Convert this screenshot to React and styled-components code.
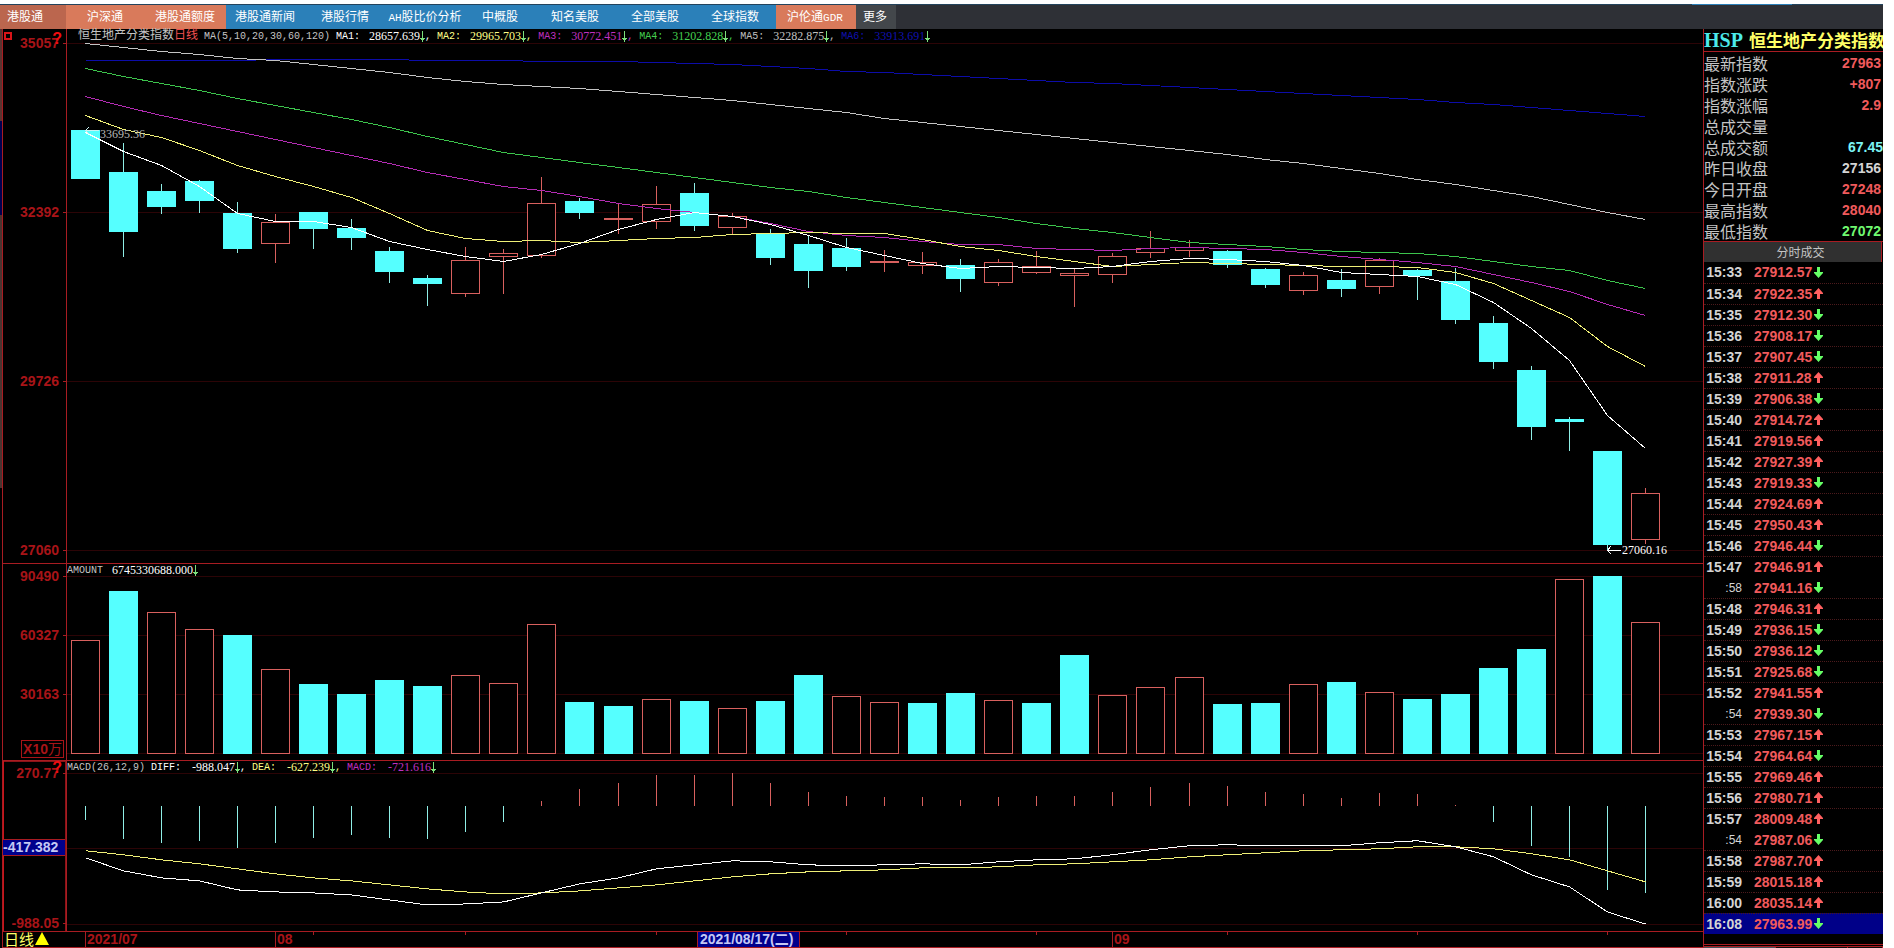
import React from "react";
import styled, { createGlobalStyle, css } from "styled-components";

const C = {
  line: "#a81c22",
  axis: "#a81418",
  grid: "#2c0406",
  cyan: "#55ffff",
  thinCyan: "#8feee6",
  red: "#d8605e",
  price: "#f05a5c",
  green: "#66ff66",
  grey: "#c4c4c4",
  yellow: "#ffff66",
};

const CJK = '"Noto Sans CJK SC"';

const Global = createGlobalStyle`
  *, *::before, *::after { box-sizing: border-box; }
  body { margin: 0; background: #fff; }
  button { font: inherit; color: inherit; border: 0; background: none; padding: 0; cursor: pointer; }
`;

const Page = styled.div`
  display: flex;
  flex-direction: column;
  min-height: 100vh;
  padding: 4px 11px 0 0;
  font-family: "Liberation Sans", ${CJK}, sans-serif;
  color: ${C.grey};
`;

/* ---------- navigation ---------- */

const Nav = styled.nav`
  position: relative;
  display: flex;
  height: 25px;
  flex: none;
  background: #2e3036;
  border-top: 1px solid #23435c;
`;

const NAV_TONES = { dark: "#bb664e", coral: "#d97a5b", blue: "#2b80b9", more: "#43474b" };

const NavButton = styled.button`
  flex: none;
  width: ${(p) => p.$width || 80}px;
  background: ${(p) => NAV_TONES[p.$tone]};
  padding: 2px ${(p) => (p.$tone === "dark" ? 16 : 2)}px 0 0;
  color: #fff;
  font: 12px/22px "Liberation Mono", ${CJK}, monospace;
  white-space: nowrap;
`;

const NavLatin = styled.span`
  font-size: 11px;
`;

const NavMark = styled.span`
  position: absolute;
  top: -1px;
  right: 91px;
  width: 100px;
  height: 1px;
  background: #2b80b9;
`;

/* ---------- frame ---------- */

const Body = styled.div`
  display: grid;
  grid-template-columns: 2px minmax(0, 1fr) 180px;
  flex: 1;
  background: #000;
`;

const EdgeStrip = styled.div`
  display: flex;
  flex-direction: column;
`;

const EdgePart = styled.span`
  flex: ${(p) => p.$grow} 1 0;
  background: ${(p) => p.$tone};
`;

const Charts = styled.main`
  display: flex;
  flex-direction: column;
  border-left: 1px solid ${C.line};
  min-width: 0;
`;

const Pane = styled.section`
  display: grid;
  grid-template-columns: 64px minmax(0, 1fr);
  flex: ${(p) => p.$grow} 1 0;
  min-height: 120px;
  border-bottom: 1px solid ${C.line};
`;

const Axis = styled.div`
  position: relative;
  display: flex;
  flex-direction: column;
  justify-content: space-between;
  align-items: flex-end;
  padding: ${(p) => p.$pad};
  border-right: 1px solid ${C.line};
  ${(p) =>
    p.$active &&
    css`
      box-shadow: inset 1px 0 #c8141a, inset -1px 0 #8c1418, inset 0 1px #8c1418;
    `}
`;

const AxisLabel = styled.span`
  position: relative;
  padding-right: 7px;
  color: ${C.axis};
  font: bold 14px/14px "Liberation Sans", sans-serif;
  &::after {
    content: "";
    position: absolute;
    right: 0;
    top: 7px;
    width: 3px;
    height: 1px;
    background: ${C.line};
  }
`;

const UnitBox = styled.span`
  margin: -6px 2px 0 0;
  padding: 0 1px;
  border: 1px solid ${C.axis};
  color: ${C.axis};
  font: bold 14px/16px "Liberation Sans", ${CJK}, sans-serif;
  white-space: nowrap;
`;

const UnitText = styled.span`
  font-weight: 400;
`;

const CursorValue = styled.output`
  width: 62px;
  margin-right: 1px;
  border: solid ${C.line};
  border-width: 1px 0;
  background: #00008c;
  color: #c4c8f4;
  font: bold 14px/15px "Liberation Sans", sans-serif;
`;

const HelpButton = styled.button`
  position: absolute;
  z-index: 1;
  top: ${(p) => p.$top}px;
  right: 4px;
  color: #f00c10;
  font: bold 16px/14px "Liberation Sans", sans-serif;
`;

const CloseBox = styled.button`
  position: absolute;
  top: 3px;
  left: 1px;
  width: 8px;
  height: 8px;
  border: 2px solid #d81418;
`;

const Plot = styled.div`
  position: relative;
  display: flex;
  min-width: 0;
`;

const Drawing = styled.svg`
  display: block;
  flex: 1;
  width: 100%;
  height: 100%;
  min-width: 0;
`;

const Legend = styled.div`
  position: absolute;
  top: 0;
  left: ${(p) => p.$left}px;
  display: flex;
  align-items: center;
  height: ${(p) => p.$height}px;
  font: 10px/13px "Liberation Mono", ${CJK}, monospace;
  white-space: pre;
`;

const LegendTitle = styled.span`
  font-size: 12px;
  color: ${(p) => p.$color || C.grey};
`;

const LegendName = styled.span`
  margin: 0 6px 0 ${(p) => p.$left || 0}px;
`;

const LegendItem = styled.span`
  display: flex;
  align-items: center;
  color: ${(p) => p.$color};
`;

const LegendValue = styled.span`
  margin-left: ${(p) => (p.$flush ? 0 : 6)}px;
  min-width: ${(p) => p.$chars * 6}px;
  font: 12px/13px "Liberation Serif", serif;
  text-align: right;
`;

const PlotNote = styled.span`
  position: absolute;
  transform: translateY(-50%);
  color: ${(p) => p.$color};
  font: 12px/12px "Liberation Serif", serif;
`;

/* ---------- date axis ---------- */

const DateRow = styled.footer`
  display: grid;
  grid-template-columns: 64px minmax(0, 1fr);
  height: 16px;
  flex: none;
  border-bottom: 1px solid ${C.line};
`;

const PeriodButton = styled.button`
  display: flex;
  align-items: center;
  gap: 1px;
  height: 14px;
  padding-left: 1px;
  color: ${C.yellow};
  font: 15px/14px ${CJK}, sans-serif;
`;

const DateLabel = styled.span`
  position: absolute;
  top: 0;
  height: 15px;
  padding-left: 1px;
  border-left: 1px solid ${C.line};
  color: ${C.axis};
  font: bold 14px/14px "Liberation Sans", ${CJK}, sans-serif;
  white-space: nowrap;
  ${(p) =>
    p.$current &&
    css`
      padding: 0 6px 0 2px;
      border-right: 1px solid ${C.line};
      background: #00008c;
      color: #c4c8f4;
    `}
`;

const BottomEdge = styled.div`
  height: 1px;
  flex: none;
  background: linear-gradient(90deg, #b4b4b0 60px, #000 60px);
`;

/* ---------- quote panel ---------- */

const Side = styled.aside`
  border-left: 1px solid ${C.line};
  overflow: hidden;
`;

const SideTitle = styled.h1`
  display: flex;
  align-items: center;
  gap: 6px;
  height: 23px;
  margin: 0;
  border-bottom: 1px solid ${C.line};
  color: ${C.yellow};
  font: bold 17px/22px ${CJK}, sans-serif;
  white-space: nowrap;
`;

const Code = styled.span`
  color: #4ceaea;
  font: bold 20px/22px "Liberation Serif", serif;
`;

const Quotes = styled.dl`
  margin: 0;
  border-bottom: 1px solid ${C.line};
`;

const Quote = styled.div`
  display: flex;
  justify-content: space-between;
  height: 21px;
  padding-right: ${(p) => (p.$wide ? 0 : 2)}px;
  font-size: 16px;
  line-height: 22px;
  font-family: ${CJK}, sans-serif;
`;

const QuoteValue = styled.dd`
  margin: 0;
  color: ${(p) => p.$color};
  font: bold 14px/22px "Liberation Sans", sans-serif;
`;

const TickTitle = styled.h2`
  height: 20px;
  margin: 0 1px 0 0;
  padding-left: 16px;
  border-right: 1px solid ${C.line};
  background: #303030;
  color: ${C.grey};
  font: 12px/20px ${CJK}, sans-serif;
  text-align: center;
`;

const Ticks = styled.table`
  width: 100%;
  border-collapse: collapse;
  table-layout: fixed;
  font: bold 14px/20px "Liberation Sans", sans-serif;
`;

const TickRow = styled.tr`
  height: 21px;
  background: ${(p) => (p.$current ? "#000088" : "none")};
  border-bottom: 1px ${(p) => (p.$joined ? "solid transparent" : "dotted #4c1a1c")};
`;

const TickTime = styled.th`
  width: 50px;
  padding: 0 12px 0 0;
  color: #d4d4d4;
  text-align: right;
  font-size: ${(p) => (p.$sub ? 12 : 14)}px;
  font-weight: ${(p) => (p.$sub ? 400 : 700)};
`;

const TickPrice = styled.td`
  padding: 0;
  color: ${C.price};
`;

const TickCell = styled.span`
  display: flex;
  align-items: center;
  gap: 2px;
`;

const BottomTabs = styled.div`
  display: grid;
  grid-template-columns: 72px 72px 1fr;
  height: 5px;
  margin-top: 9px;
  border-top: 1px solid ${C.line};
`;

const TabEdge = styled.span`
  margin-top: 1px;
  border-top: 1px solid ${C.line};
  border-right: 1px solid ${C.line};
  background: ${(p) => (p.$on ? "#46525a" : "#0c0c0c")};
`;

/* ---------- data ---------- */

const NAV = [
  ["港股通", "dark", 66],
  ["沪深通", "coral"],
  ["港股通额度", "coral"],
  ["港股通新闻", "blue"],
  ["港股行情", "blue"],
  ["股比价分析", "blue", 80, "AH"],
  ["中概股", "blue", 70],
  ["知名美股", "blue"],
  ["全部美股", "blue"],
  ["全球指数", "blue"],
  ["沪伦通", "coral", 80, "", "GDR"],
  ["更多", "more", 40],
];

// kind (d = falling, u = rising), body top, body bottom, high, low
const CANDLES = [
  ["d", 130, 179, 130, 179], ["d", 172, 232, 143, 257], ["d", 191, 207, 184, 214],
  ["d", 181, 201, 180, 213], ["d", 213, 249, 202, 253], ["u", 222, 244, 214, 263],
  ["d", 212, 229, 212, 249], ["d", 228, 238, 219, 250], ["d", 251, 272, 247, 283],
  ["d", 278, 284, 275, 306], ["u", 260, 294, 247, 297], ["u", 253, 257, 249, 294],
  ["u", 203, 256, 177, 258], ["d", 201, 213, 198, 219], ["u", 218, 220, 204, 234],
  ["u", 204, 222, 186, 229], ["d", 193, 226, 183, 231], ["u", 216, 228, 213, 234],
  ["d", 233, 258, 229, 265], ["d", 244, 271, 235, 288], ["d", 248, 267, 238, 271],
  ["u", 261, 263, 250, 272], ["u", 262, 266, 252, 274], ["d", 265, 279, 259, 292],
  ["u", 262, 283, 259, 286], ["u", 266, 273, 251, 274], ["u", 273, 276, 268, 307],
  ["u", 256, 275, 253, 283], ["u", 248, 253, 231, 258], ["u", 247, 251, 240, 257],
  ["d", 251, 265, 250, 268], ["d", 269, 285, 268, 288], ["u", 275, 291, 272, 295],
  ["d", 280, 289, 269, 297], ["u", 260, 287, 258, 294], ["d", 270, 276, 269, 300],
  ["d", 281, 320, 268, 324], ["d", 323, 362, 316, 369], ["d", 370, 427, 366, 440],
  ["d", 419, 422, 417, 451], ["d", 451, 545, 451, 550], ["u", 493, 540, 488, 544],
];

const AMOUNTS = [
  "u640", "d591", "u612", "u629", "d635", "u669", "d684", "d694", "d680", "d686", "u675",
  "u683", "u624", "d702", "d706", "u699", "d701", "u708", "d701", "d675", "u696", "u702",
  "d703", "d693", "u700", "d703", "d655", "u695", "u687", "u677", "d704", "d703", "u684",
  "d682", "u692", "d699", "d694", "d668", "d649", "u579", "d576", "u622",
];

const HIST = [
  820, 839, 843, 841, 848, 843, 838, 835, 838, 839, 832, 822, 801, 789, 783, 775, 775, 773,
  783, 792, 796, 797, 797, 800, 797, 796, 796, 792, 787, 783, 786, 792, 794, 798, 793, 794,
  805, 822, 846, 857, 890, 893,
];

const AVERAGES = [
  ["#0c0ca8", [60, 60, 60, 60, 60, 59, 59, 59, 59, 60, 60, 60, 61, 61, 61, 62, 63, 64, 66, 68, 71, 72, 74, 76, 78, 80, 82, 83, 85, 87, 89, 91, 93, 95, 97, 99, 102, 104, 107, 110, 113, 116]],
  ["#c4c4c4", [43, 47, 51, 54, 58, 60, 64, 68, 72, 77, 81, 84, 86, 88, 91, 94, 97, 100, 104, 108, 112, 118, 122, 126, 130, 134, 138, 142, 146, 150, 154, 159, 163, 168, 173, 179, 184, 190, 196, 204, 212, 219]],
  ["#3cc44c", [68, 76, 83, 90, 98, 105, 112, 119, 127, 136, 144, 152, 157, 162, 167, 172, 177, 182, 187, 191, 197, 202, 207, 212, 217, 223, 228, 232, 237, 242, 244, 246, 249, 251, 252, 253, 256, 261, 266, 270, 280, 288]],
  ["#b42cb4", [96, 106, 115, 123, 131, 139, 147, 155, 163, 172, 179, 186, 190, 196, 203, 208, 212, 216, 223, 231, 235, 237, 241, 244, 244, 248, 249, 250, 248, 247, 248, 249, 252, 256, 259, 262, 266, 274, 282, 291, 304, 315]],
  ["#f0f078", [115, 129, 137, 150, 165, 176, 186, 197, 213, 230, 238, 241, 240, 242, 240, 238, 237, 234, 233, 232, 233, 233, 239, 246, 250, 256, 261, 266, 264, 262, 263, 264, 265, 266, 266, 267, 272, 283, 300, 317, 346, 366]],
  ["#ffffff", [132, 151, 165, 186, 213, 221, 221, 227, 241, 249, 256, 261, 254, 243, 229, 219, 212, 216, 224, 235, 247, 255, 263, 268, 266, 267, 268, 266, 261, 258, 259, 261, 265, 272, 274, 276, 284, 302, 328, 360, 415, 448]],
];

const DIFF = [857, 870, 877, 880, 889, 891, 892, 894, 899, 904, 903, 901, 892, 883, 877, 868, 864, 860, 861, 864, 865, 864, 863, 864, 861, 859, 858, 854, 849, 845, 844, 845, 845, 845, 842, 840, 846, 856, 874, 886, 911, 923];
const DEA = [850, 854, 859, 863, 868, 873, 877, 880, 884, 888, 891, 893, 892, 890, 887, 884, 880, 876, 873, 871, 870, 869, 867, 867, 866, 864, 863, 861, 859, 856, 854, 852, 850, 849, 848, 846, 846, 848, 853, 859, 870, 881];

const MA_LEGEND = [
  ["MA1:", "28657.639", "#ffffff"],
  ["MA2:", "29965.703", "#ffff88"],
  ["MA3:", "30772.451", "#c030c0"],
  ["MA4:", "31202.828", "#44d050"],
  ["MA5:", "32282.875", "#c0c0c0"],
  ["MA6:", "33913.691", "#1010b0"],
];

const MACD_LEGEND = [
  ["DIFF:", "-988.047", "#ffffff"],
  ["DEA:", "-627.239", "#ffff88"],
  ["MACD:", "-721.616", "#c030c0"],
];

const QUOTES = [
  ["最新指数", "27963", C.price],
  ["指数涨跌", "+807", C.price],
  ["指数涨幅", "2.9", C.price],
  ["总成交量", "", C.grey],
  ["总成交额", "67.45", "#7cf4f4"],
  ["昨日收盘", "27156", "#d4d4d4"],
  ["今日开盘", "27248", C.price],
  ["最高指数", "28040", C.price],
  ["最低指数", "27072", "#70f870"],
];

const TICKS = `15:33 27912.57 d|15:34 27922.35 u|15:35 27912.30 d|15:36 27908.17 d|15:37 27907.45 d|15:38 27911.28 u|15:39 27906.38 d|15:40 27914.72 u|15:41 27919.56 u|15:42 27927.39 u|15:43 27919.33 d|15:44 27924.69 u|15:45 27950.43 u|15:46 27946.44 d|15:47 27946.91 u|:58 27941.16 d|15:48 27946.31 u|15:49 27936.15 d|15:50 27936.12 d|15:51 27925.68 d|15:52 27941.55 u|:54 27939.30 d|15:53 27967.15 u|15:54 27964.64 d|15:55 27969.46 u|15:56 27980.71 u|15:57 28009.48 u|:54 27987.06 d|15:58 27987.70 u|15:59 28015.18 u|16:00 28035.14 u|16:08 27963.99 d`
  .split("|")
  .map((t) => t.split(" "));

/* ---------- drawing helpers ---------- */

const LEFT = 67;
const WIDTH = 1636;
const barX = (i) => 85 + 38 * i + (i >= 14 ? 1 : 0) + (i >= 29 ? 1 : 0);
const pct = (x) => `${((x - LEFT) / WIDTH) * 100}%`;

function Line({ values, color }) {
  const points = values.map((y, i) => `${barX(i) + 0.5},${y + 0.5}`).join(" ");
  return <polyline points={points} fill="none" stroke={color} />;
}

function Bar({ i, kind, top, bottom }) {
  const x = barX(i) - 14;
  if (kind === "d") return <rect x={x} y={top} width="29" height={bottom - top} fill={C.cyan} />;
  if (bottom - top <= 2) return <rect x={x} y={top} width="29" height="2" fill={C.red} />;
  return (
    <rect x={x + 0.5} y={top + 0.5} width="28" height={bottom - top - 1} fill="#000" stroke={C.red} />
  );
}

function Canvas({ top, height, grid, children, label }) {
  return (
    <Drawing
      viewBox={`${LEFT} ${top} ${WIDTH} ${height}`}
      preserveAspectRatio="none"
      shapeRendering="crispEdges"
      role="img"
      aria-label={label}
    >
      {grid.map((y) => (
        <rect key={y} x={LEFT} y={y} width={WIDTH} height="1" fill={C.grid} />
      ))}
      {children}
    </Drawing>
  );
}

function ThinArrow() {
  return (
    <svg width="5" height="11" viewBox="0 0 5 11" fill="none" stroke="#7ce07c" shapeRendering="crispEdges">
      <path d="M2.500 0V11M0 7.500H5M1 8.500H4" />
    </svg>
  );
}

function FatArrow({ dir }) {
  const d = dir === "u" ? "M4.500 0L9 5V6H6V11H3V6H0V5Z" : "M4.500 11L9 6V5H6V0H3V5H0V6Z";
  return (
    <svg width="9" height="11" viewBox="0 0 9 11">
      <path d={d} fill={dir === "u" ? "#ff6060" : C.green} />
    </svg>
  );
}

function LegendItems({ items }) {
  return items.map(([name, value, color], i) => (
    <LegendItem key={name} $color={color}>
      {name}
      <LegendValue $chars={value.length}>{value}</LegendValue>
      <ThinArrow />
      {i < items.length - 1 ? ", " : ""}
    </LegendItem>
  ));
}

const DATE_TICKS = [6, 10, 15, 20, 25, 30, 35, 40];

export default function App() {
  return (
    <Page>
      <Global />
      <Nav>
        {NAV.map(([text, tone, width, before, after]) => (
          <NavButton key={text} $tone={tone} $width={width}>
            {before && <NavLatin>{before}</NavLatin>}
            {text}
            {after && <NavLatin>{after}</NavLatin>}
          </NavButton>
        ))}
        <NavMark />
      </Nav>

      <Body>
        <EdgeStrip>
          <EdgePart $grow={92} $tone="#5a3430" />
          <EdgePart $grow={94} $tone="#000050" />
          <EdgePart $grow={272} $tone="#4a3430" />
          <EdgePart $grow={460} $tone="#000" />
        </EdgeStrip>

        <Charts>
          <Pane $grow={535}>
            <Axis $pad="7px 0 6px">
              <CloseBox aria-label="关闭" />
              <HelpButton $top={3}>?</HelpButton>
              <AxisLabel>35057</AxisLabel>
              <AxisLabel>32392</AxisLabel>
              <AxisLabel>29726</AxisLabel>
              <AxisLabel>27060</AxisLabel>
            </Axis>
            <Plot>
              <Canvas top={29} height={534} grid={[43, 212, 381, 550]} label="恒生地产分类指数日线">
                {CANDLES.map(([kind, top, bottom, high, low], i) => (
                  <g key={i}>
                    <rect
                      x={barX(i)}
                      y={high}
                      width="1"
                      height={low - high}
                      fill={kind === "d" ? C.thinCyan : C.red}
                    />
                    <Bar i={i} kind={kind} top={top} bottom={bottom} />
                  </g>
                ))}
                {AVERAGES.map(([color, values]) => (
                  <Line key={color} color={color} values={values} />
                ))}
                <path d="M89 127L85.500 130.500L89 134M86 130.500H99" fill="none" stroke="#c8f4f4" />
                <path d="M1611 546L1607.500 550.500L1611 554M1608 550.500H1621" fill="none" stroke="#fff" />
              </Canvas>
              <Legend $left={11} $height={15}>
                <LegendTitle>恒生地产分类指数</LegendTitle>
                <LegendTitle $color="#f05050">日线</LegendTitle>
                <LegendName $left={6}>MA(5,10,20,30,60,120)</LegendName>
                <LegendItems items={MA_LEGEND} />
              </Legend>
              <PlotNote $color="#b8b8b8" style={{ left: pct(100), top: `${((134 - 29) / 534) * 100}%` }}>
                33695.36
              </PlotNote>
              <PlotNote $color="#ffffff" style={{ left: pct(1622), top: `${((550 - 29) / 534) * 100}%` }}>
                27060.16
              </PlotNote>
            </Plot>
          </Pane>

          <Pane $grow={197}>
            <Axis $pad="5px 0 2px">
              <AxisLabel>90490</AxisLabel>
              <AxisLabel>60327</AxisLabel>
              <AxisLabel>30163</AxisLabel>
              <UnitBox>
                X10<UnitText>万</UnitText>
              </UnitBox>
            </Axis>
            <Plot>
              <Canvas top={564} height={196} grid={[576, 635, 694, 753]} label="AMOUNT">
                {AMOUNTS.map((a, i) => (
                  <Bar key={i} i={i} kind={a[0]} top={Number(a.slice(1))} bottom={754} />
                ))}
              </Canvas>
              <Legend $left={0} $height={13}>
                <LegendName>AMOUNT</LegendName>
                <LegendItem $color="#ffffff">
                  <LegendValue $flush $chars={14}>6745330688.000</LegendValue>
                  <ThinArrow />
                </LegendItem>
              </Legend>
            </Plot>
          </Pane>

          <Pane $grow={170}>
            <Axis $pad="5px 0 1px" $active>
              <HelpButton $top={0}>?</HelpButton>
              <AxisLabel>270.77</AxisLabel>
              <CursorValue>-417.382</CursorValue>
              <AxisLabel>-988.05</AxisLabel>
            </Axis>
            <Plot>
              <Canvas top={761} height={169} grid={[773, 848, 923]} label="MACD">
                {HIST.map((y, i) => (
                  <rect
                    key={i}
                    x={barX(i)}
                    y={Math.min(y, 806)}
                    width="1"
                    height={Math.abs(y - 806) || 1}
                    fill={y > 806 ? C.thinCyan : C.red}
                  />
                ))}
                <Line color="#f0f078" values={DEA} />
                <Line color="#ffffff" values={DIFF} />
              </Canvas>
              <Legend $left={0} $height={13}>
                <LegendName>MACD(26,12,9)</LegendName>
                <LegendItems items={MACD_LEGEND} />
              </Legend>
            </Plot>
          </Pane>

          <DateRow>
            <PeriodButton>
              日线
              <svg width="14" height="13" viewBox="0 0 14 13">
                <path d="M7 0L14 13H0Z" fill="#ffff00" />
              </svg>
            </PeriodButton>
            <Plot>
              <Canvas top={931} height={15} grid={[]} label="日期">
                {DATE_TICKS.map((i) => (
                  <rect key={i} x={barX(i)} y="931" width="1" height="3" fill={C.line} />
                ))}
              </Canvas>
              <DateLabel style={{ left: pct(85) }}>2021/07</DateLabel>
              <DateLabel style={{ left: pct(275) }}>08</DateLabel>
              <DateLabel $current style={{ left: pct(697) }}>2021/08/17(二)</DateLabel>
              <DateLabel style={{ left: pct(1112) }}>09</DateLabel>
            </Plot>
          </DateRow>
          <BottomEdge />
        </Charts>

        <Side>
          <SideTitle>
            <Code>HSP</Code>
            恒生地产分类指数
          </SideTitle>
          <Quotes>
            {QUOTES.map(([name, value, color]) => (
              <Quote key={name} $wide={name === "总成交额"}>
                <dt>{name}</dt>
                <QuoteValue $color={color}>{value}</QuoteValue>
              </Quote>
            ))}
          </Quotes>
          <TickTitle>分时成交</TickTitle>
          <Ticks>
            <tbody>
              {TICKS.map(([time, price, dir], i) => {
                const next = TICKS[i + 1];
                return (
                  <TickRow key={i} $current={!next} $joined={!next || next[0].length < 5}>
                    <TickTime scope="row" $sub={time.length < 5}>{time}</TickTime>
                    <TickPrice>
                      <TickCell>
                        {price}
                        <FatArrow dir={dir} />
                      </TickCell>
                    </TickPrice>
                  </TickRow>
                );
              })}
            </tbody>
          </Ticks>
          <BottomTabs>
            <TabEdge $on />
            <TabEdge />
            <TabEdge />
          </BottomTabs>
        </Side>
      </Body>
    </Page>
  );
}
